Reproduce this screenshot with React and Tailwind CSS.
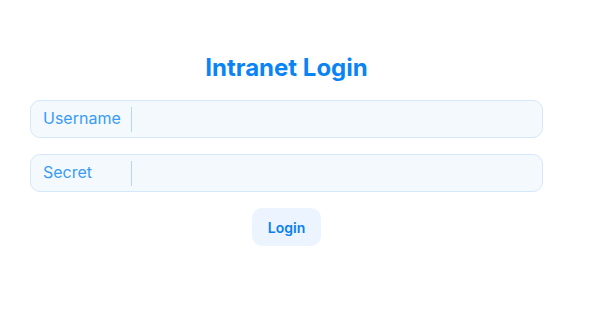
export default function App() {
  return (
    <div className="w-[595px] h-[310px] bg-white" style={{ fontFamily: "Inter, 'Noto Sans', sans-serif" }}>
      <div className="ml-[30px] w-[513px] pt-[52px] flex flex-col items-center">
        <h1 className="text-[24px] leading-[32px] font-bold text-[#0a84f5]">Intranet Login</h1>
        <div className="mt-[16px] w-full flex flex-col gap-[16px]">
          <div className="h-[38px] w-full flex items-center rounded-[10px] border border-[#d5e7fb] bg-[#f4f9fe]">
            <span className="w-[100px] pl-[12px] text-[16px] leading-[20px] pb-[3px] text-[#3a9bf4]">Username</span>
            <span className="h-[25px] w-px bg-[#b5d7f7]"></span>
            <input className="flex-1 h-full bg-transparent outline-none px-2" />
          </div>
          <div className="h-[38px] w-full flex items-center rounded-[10px] border border-[#d5e7fb] bg-[#f4f9fe]">
            <span className="w-[100px] pl-[12px] text-[16px] leading-[20px] pb-[3px] text-[#3a9bf4]">Secret</span>
            <span className="h-[25px] w-px bg-[#b5d7f7]"></span>
            <input type="password" className="flex-1 h-full bg-transparent outline-none px-2" />
          </div>
        </div>
        <button className="mt-[16px] w-[69px] h-[38px] rounded-[10px] bg-[#ebf4ff] text-[14px] font-semibold text-[#0a7ff0]">Login</button>
      </div>
    </div>
  );
}
